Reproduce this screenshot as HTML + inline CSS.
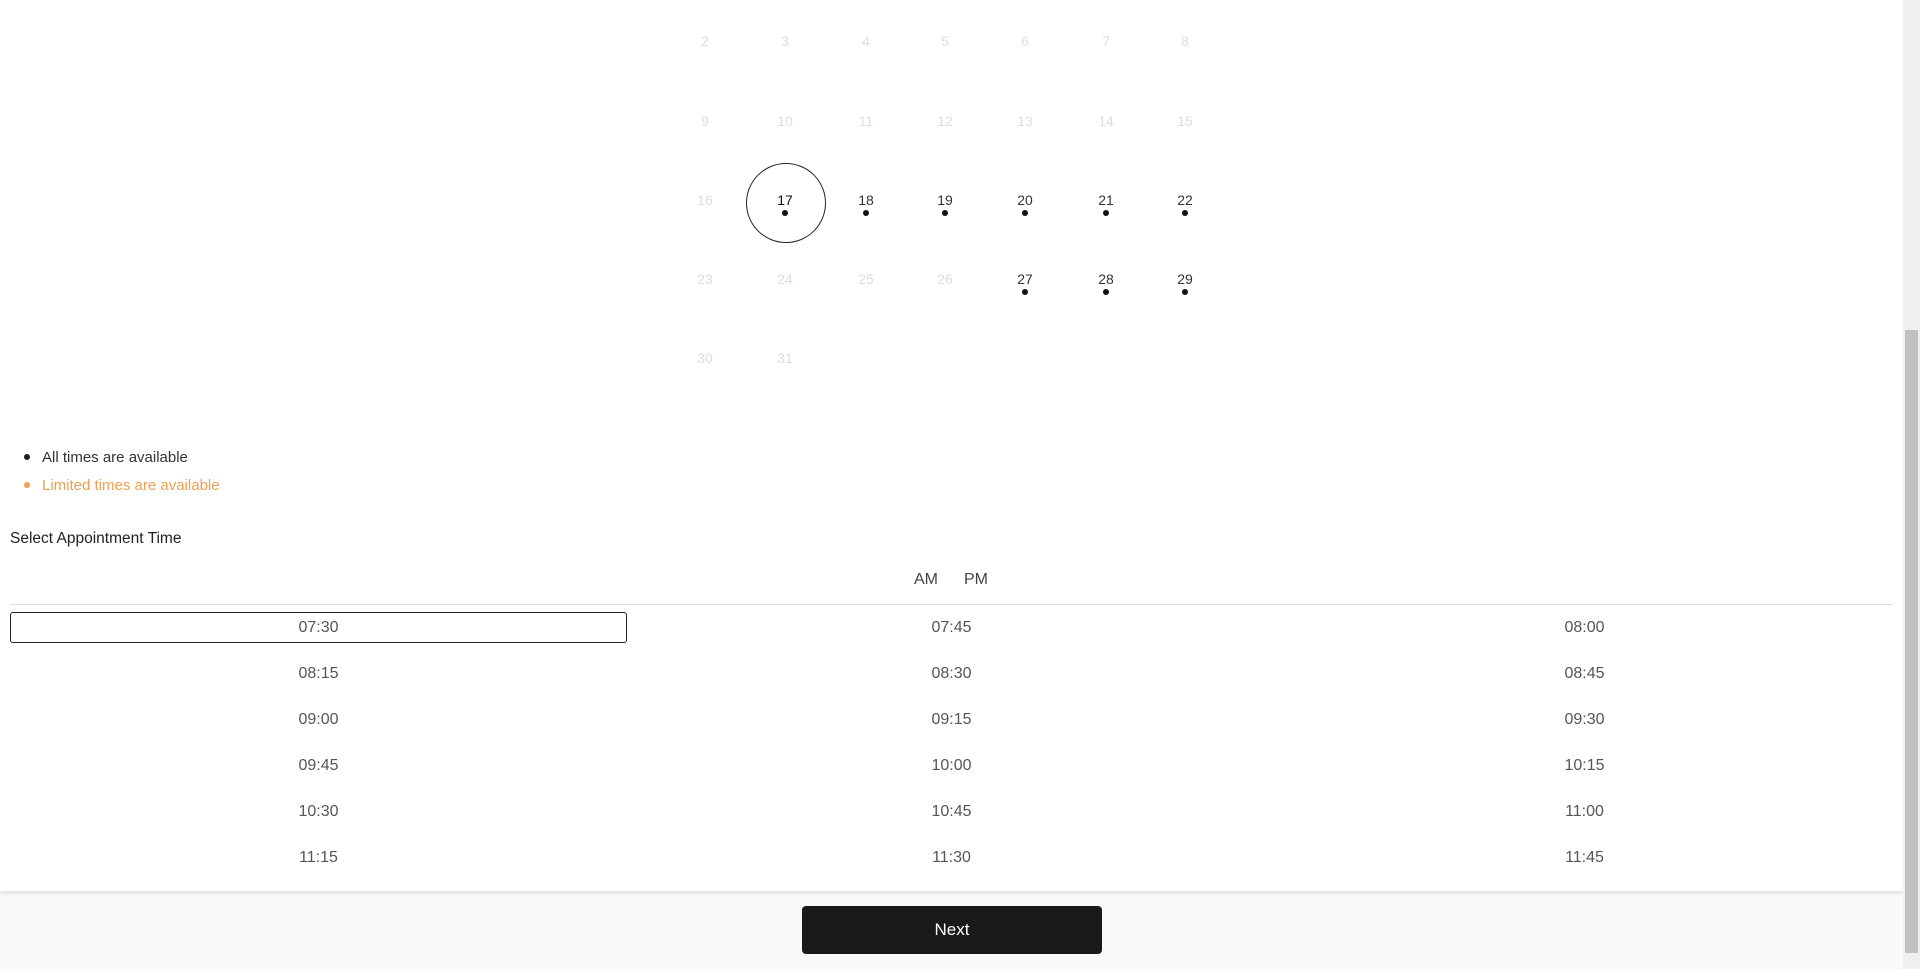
<!DOCTYPE html>
<html><head><style>
body{margin:0;width:1920px;height:969px;overflow:hidden;background:#f9f9f9;font-family:"Liberation Sans",sans-serif;position:relative}
.card{position:absolute;left:0;top:0;width:1903px;height:891px;background:#fff;box-shadow:0 2px 4px rgba(0,0,0,.12)}
.d{position:absolute;width:60px;margin-left:-30px;text-align:center;font-size:14px;color:#ddd;line-height:16px}
.d.a{color:#333}
.d.a::after{content:"";position:absolute;left:27px;top:18px;width:6px;height:6px;border-radius:50%;background:#111}
.circ{position:absolute;left:746px;top:163px;width:78px;height:78px;border:1.2px solid #222;border-radius:50%}
.t{position:absolute;width:617px;text-align:center;font-size:16px;color:#555;line-height:20px}
.sb{position:absolute;left:1903px;top:0;width:17px;height:969px;background:#f0f0f0}
.th{position:absolute;left:1905px;top:330px;width:13px;height:623px;background:#c1c1c1}
</style></head><body>
<div class="card">
<div class="circ"></div>
<div id="cal"></div>
<div style="position:absolute;left:24px;top:454px;width:6px;height:6px;border-radius:50%;background:#222"></div>
<div style="position:absolute;left:42px;top:449px;font-size:15px;color:#333">All times are available</div>
<div style="position:absolute;left:24px;top:482px;width:6px;height:6px;border-radius:50%;background:#f0a050"></div>
<div style="position:absolute;left:42px;top:477px;font-size:15px;color:#f0a050">Limited times are available</div>
<div style="position:absolute;left:10px;top:530px;font-size:15.5px;color:#222">Select Appointment Time</div>
<div style="position:absolute;left:914px;top:571px;font-size:16px;color:#444">AM</div>
<div style="position:absolute;left:964px;top:571px;font-size:16px;color:#444">PM</div>
<div style="position:absolute;left:10px;top:604px;width:1882px;height:1px;background:#ddd"></div>
<div style="position:absolute;left:10px;top:612px;width:615px;height:29px;border:1.2px solid #222;border-radius:3px"></div>
<div id="times"></div>
</div>
<div style="position:absolute;left:802px;top:906px;width:300px;height:48px;background:#1a1a1a;border-radius:4px;color:#fff;font-size:17px;text-align:center;line-height:48px">Next</div>
<div class="sb"></div><div class="th"></div>
<script>
var xs=[705,785,866,945,1025,1106,1185],ys=[33,113,192,271,350],h='';
var act=[17,18,19,20,21,22,27,28,29];
for(var n=2;n<=31;n++){var i=n-2,r=Math.floor(i/7),c=i%7;
h+='<div class="d'+(act.indexOf(n)>=0?' a':'')+'" style="left:'+xs[c]+'px;top:'+ys[r]+'px;'+(n==17?'color:#111':'')+'">'+n+'</div>';}
document.getElementById('cal').innerHTML=h;
var t=['07:30','07:45','08:00','08:15','08:30','08:45','09:00','09:15','09:30','09:45','10:00','10:15','10:30','10:45','11:00','11:15','11:30','11:45'];h='';
for(var k=0;k<t.length;k++){h+='<div class="t" style="left:'+(10+633*(k%3))+'px;top:'+(618+46*Math.floor(k/3))+'px">'+t[k]+'</div>';}
document.getElementById('times').innerHTML=h;
</script>
</body></html>
